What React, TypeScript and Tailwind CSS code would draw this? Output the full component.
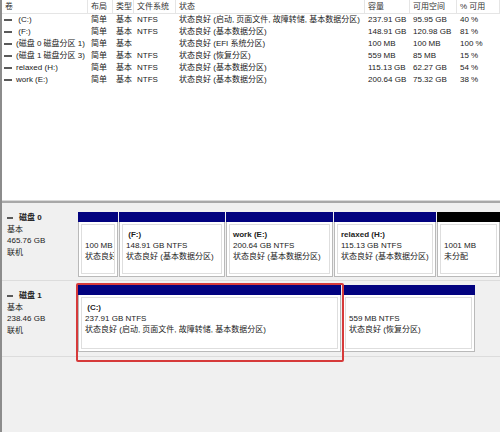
import React from 'react';

const font = { fontFamily: '"Liberation Sans", "Noto Sans CJK SC", sans-serif' };

type Vol = { name: string; layout: string; type: string; fs: string; status: string; cap: string; free: string; pct: string };

const volumes: Vol[] = [
    { name: ' (C:)', layout: '简单', type: '基本', fs: 'NTFS', status: '状态良好 (启动, 页面文件, 故障转储, 基本数据分区)', cap: '237.91 GB', free: '95.95 GB', pct: '40 %' },
    { name: ' (F:)', layout: '简单', type: '基本', fs: 'NTFS', status: '状态良好 (基本数据分区)', cap: '148.91 GB', free: '120.98 GB', pct: '81 %' },
    { name: '(磁盘 0 磁盘分区 1)', layout: '简单', type: '基本', fs: '', status: '状态良好 (EFI 系统分区)', cap: '100 MB', free: '100 MB', pct: '100 %' },
    { name: '(磁盘 1 磁盘分区 3)', layout: '简单', type: '基本', fs: 'NTFS', status: '状态良好 (恢复分区)', cap: '559 MB', free: '85 MB', pct: '15 %' },
    { name: 'relaxed (H:)', layout: '简单', type: '基本', fs: 'NTFS', status: '状态良好 (基本数据分区)', cap: '115.13 GB', free: '62.27 GB', pct: '54 %' },
    { name: 'work (E:)', layout: '简单', type: '基本', fs: 'NTFS', status: '状态良好 (基本数据分区)', cap: '200.64 GB', free: '75.32 GB', pct: '38 %' },
];

// column widths in px, last one takes the rest
const cols = ['w-[86px]', 'w-[25px]', 'w-[21px]', 'w-[42px]', 'w-[189px]', 'w-[45px]', 'w-[47px]', 'flex-1'];
const headers = ['卷', '布局', '类型', '文件系统', '状态', '容量', '可用空间', '% 可用'];

function Dash({ className = '' }: { className?: string }) {
    return <span className={`inline-block h-[2px] bg-[#5a5a5a] shrink-0 ${className}`} />;
}

type Part = { w: string; bar: string; name?: string; size: string; status: string };

function Partition({ p, h }: { p: Part; h: string }) {
    return (
        <div className={`${p.w} ${h} flex flex-col shrink-0`}>
            <div className={`h-[10px] ${p.bar}`} />
            <div className="flex-1 bg-white border border-t-0 border-[#b9b9b9] p-[2px]">
                <div className="h-full border border-[#dedede] pl-[3px] pt-[4px] text-[8px] leading-[11px] text-[#222] whitespace-nowrap overflow-hidden">
                    <div className="font-bold h-[11px]">{p.name ?? ''}</div>
                    <div>{p.size}</div>
                    <div>{p.status}</div>
                </div>
            </div>
        </div>
    );
}

function DiskLabel({ n, size }: { n: string; size: string }) {
    return (
        <div className="w-[76px] shrink-0 pl-[5px] pt-[9px] text-[8px] leading-[11.5px] text-[#222]">
            <div className="flex items-center gap-[6px]">
                <Dash className="w-[6px]" />
                <span className="font-bold">磁盘 {n}</span>
            </div>
            <div>基本</div>
            <div>{size}</div>
            <div>联机</div>
        </div>
    );
}

const disk0: Part[] = [
    { w: 'w-[40px]', bar: 'bg-[#02027f]', size: '100 MB', status: '状态良好' },
    { w: 'w-[106px]', bar: 'bg-[#02027f]', name: '\u00a0(F:)', size: '148.91 GB NTFS', status: '状态良好 (基本数据分区)' },
    { w: 'w-[107px]', bar: 'bg-[#02027f]', name: 'work  (E:)', size: '200.64 GB NTFS', status: '状态良好 (基本数据分区)' },
    { w: 'w-[102px]', bar: 'bg-[#02027f]', name: 'relaxed  (H:)', size: '115.13 GB NTFS', status: '状态良好 (基本数据分区)' },
    { w: 'flex-1', bar: 'bg-black', size: '1001 MB', status: '未分配' },
];

const disk1: Part[] = [
    { w: 'w-[263px]', bar: 'bg-[#02027f]', name: '\u00a0(C:)', size: '237.91 GB NTFS', status: '状态良好 (启动, 页面文件, 故障转储, 基本数据分区)' },
    { w: 'w-[133px]', bar: 'bg-[#02027f]', size: '559 MB NTFS', status: '状态良好 (恢复分区)' },
];

export default function App() {
    return (
        <div className="w-[500px] h-[432px] bg-[#f0f0f0] border-l-2 border-[#8c8c8c] flex flex-col overflow-hidden" style={font}>
            {/* volume list */}
            <div className="h-[200px] bg-white flex flex-col shrink-0">
                <div className="h-[14px] flex border-b border-[#e5e5e5] text-[8px] text-[#333]">
                    {headers.map((t, i) => (
                        <div key={i} className={`${cols[i]} shrink-0 pl-[3px] flex items-center border-r border-[#e5e5e5]`}>{t}</div>
                    ))}
                </div>
                {volumes.map((v, i) => (
                    <div key={i} className="h-[12px] flex items-center text-[8px] text-[#222] whitespace-nowrap">
                        <div className={`${cols[0]} shrink-0 flex items-center pl-[2px] gap-[4px] overflow-hidden`}>
                            <Dash className="w-[8px]" />
                            <span className="whitespace-pre">{v.name}</span>
                        </div>
                        <div className={`${cols[1]} shrink-0 pl-[3px]`}>{v.layout}</div>
                        <div className={`${cols[2]} shrink-0 pl-[3px]`}>{v.type}</div>
                        <div className={`${cols[3]} shrink-0 pl-[3px]`}>{v.fs}</div>
                        <div className={`${cols[4]} shrink-0 pl-[3px] overflow-hidden`}>{v.status}</div>
                        <div className={`${cols[5]} shrink-0 pl-[3px]`}>{v.cap}</div>
                        <div className={`${cols[6]} shrink-0 pl-[3px]`}>{v.free}</div>
                        <div className={`${cols[7]} pl-[3px]`}>{v.pct}</div>
                    </div>
                ))}
            </div>

            {/* splitter */}
            <div className="h-[3px] shrink-0 border-t border-[#d9d9d9] border-b-2 border-b-[#a8a8a8]" />

            {/* disk graph */}
            <div className="flex-1 flex flex-col">
                <div className="h-[78px] flex border-b border-[#dcdcdc]">
                    <DiskLabel n="0" size="465.76 GB" />
                    <div className="flex-1 flex gap-[1px] pt-[9px]">
                        {disk0.map((p, i) => <Partition key={i} p={p} h="h-[65px]" />)}
                    </div>
                </div>
                <div className="h-[76px] flex border-b border-[#dcdcdc] relative">
                    <DiskLabel n="1" size="238.46 GB" />
                    <div className="flex-1 flex gap-[1px] pt-[4px]">
                        {disk1.map((p, i) => <Partition key={i} p={p} h="h-[67px]" />)}
                    </div>
                    {/* red highlight around C: */}
                    <div className="absolute left-[74px] top-[2px] w-[268px] h-[79px] border-2 border-[#d63a3a] rounded-[2px] pointer-events-none" />
                </div>
            </div>
        </div>
    );
}
